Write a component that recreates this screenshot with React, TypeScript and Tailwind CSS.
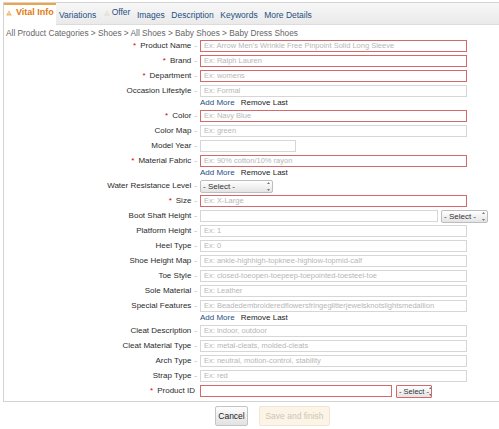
import React from 'react'

type Field = {
  label: string
  req?: boolean
  ph?: string
  kind?: 'input' | 'year' | 'select' | 'boot' | 'pid'
  addMore?: boolean
}

const FIELDS: Field[] = [
  { label: 'Product Name', req: true, ph: "Ex: Arrow Men's Wrinkle Free Pinpoint Solid Long Sleeve" },
  { label: 'Brand', req: true, ph: 'Ex: Ralph Lauren' },
  { label: 'Department', req: true, ph: 'Ex: womens' },
  { label: 'Occasion Lifestyle', ph: 'Ex: Formal', addMore: true },
  { label: 'Color', req: true, ph: 'Ex: Navy Blue' },
  { label: 'Color Map', ph: 'Ex: green' },
  { label: 'Model Year', kind: 'year' },
  { label: 'Material Fabric', req: true, ph: 'Ex: 90% cotton/10% rayon', addMore: true },
  { label: 'Water Resistance Level', kind: 'select' },
  { label: 'Size', req: true, ph: 'Ex: X-Large' },
  { label: 'Boot Shaft Height', kind: 'boot' },
  { label: 'Platform Height', ph: 'Ex: 1' },
  { label: 'Heel Type', ph: 'Ex: 0' },
  { label: 'Shoe Height Map', ph: 'Ex: ankle-highhigh-topknee-highlow-topmid-calf' },
  { label: 'Toe Style', ph: 'Ex: closed-toeopen-toepeep-toepointed-toesteel-toe' },
  { label: 'Sole Material', ph: 'Ex: Leather' },
  { label: 'Special Features', ph: 'Ex: Beadedembroideredflowersfringeglitterjewelsknotslightsmedallion', addMore: true },
  { label: 'Cleat Description', ph: 'Ex: indoor, outdoor' },
  { label: 'Cleat Material Type', ph: 'Ex: metal-cleats, molded-cleats' },
  { label: 'Arch Type', ph: 'Ex: neutral, motion-control, stability' },
  { label: 'Strap Type', ph: 'Ex: red' },
  { label: 'Product ID', req: true, kind: 'pid' },
]

const TABS = ['Variations', 'Offer', 'Images', 'Description', 'Keywords', 'More Details']

function Warn({ faded }: { faded?: boolean }) {
  return (
    <svg width="6" height="6" viewBox="0 0 6 6" className="shrink-0">
      <path d="M3 0.3 L5.8 5.6 L0.2 5.6 Z" fill={faded ? '#e6dccb' : '#f3b25c'} />
      <path d="M3 2 V3.9 M3 4.5 V5" stroke="#fff" strokeWidth="0.7" />
    </svg>
  )
}

function Arrows() {
  return (
    <svg width="3" height="9" viewBox="0 0 3 9" className="shrink-0">
      <path d="M0 2 L1.5 0 L3 2 Z" fill="#777" />
      <path d="M0 7 L1.5 9 L3 7 Z" fill="#777" />
    </svg>
  )
}

function Select({ w, red }: { w: string; red?: boolean }) {
  return (
    <div
      className={`${w} h-[13px] flex items-center justify-between px-[2px] border ${
        red ? 'border-[#d4696b] rounded-[1px] text-[7.5px]' : 'border-[#bdbdbd] rounded-[2px] text-[8px]'
      } bg-gradient-to-b from-[#ffffff] to-[#e4e4e4] text-[#333] leading-[11px] whitespace-nowrap overflow-hidden`}
    >
      <span>{red ? '- Select -' : '- Select -'}</span>
      <Arrows />
    </div>
  )
}

function Box({ w, ph, red }: { w: string; ph?: string; red?: boolean }) {
  return (
    <div
      className={`${w} h-[12px] border ${
        red ? 'border-[#d4696b]' : 'border-[#d6d6d6]'
      } pl-[3px] text-[7.5px] leading-[10px] text-[#b7b7b7] whitespace-nowrap overflow-hidden`}
    >
      {ph}
    </div>
  )
}

function Label({ f }: { f: Field }) {
  const dash = f.kind !== 'pid'
  return (
    <div className={`w-[193px] shrink-0 text-right leading-[12px] text-[#2b2b2b] whitespace-nowrap ${dash ? '' : 'pr-[2px]'}`}>
      {f.req && <span className="text-[#d0021b] mr-[4px]">*</span>}
      {f.label}
      {dash && <span className="text-[#a8a8a8] ml-[3px]">-</span>}
    </div>
  )
}

function Control({ f }: { f: Field }) {
  switch (f.kind) {
    case 'year':
      return <Box w="w-[96px]" />
    case 'select':
      return <Select w="w-[73px]" />
    case 'boot':
      return (
        <div className="flex items-start gap-[3px]">
          <Box w="w-[238px]" />
          <Select w="w-[47px]" />
        </div>
      )
    case 'pid':
      return (
        <div className="flex items-start gap-[4px]">
          <Box w="w-[192px]" red />
          <Select w="w-[36px]" red />
        </div>
      )
    default:
      return <Box w="w-[267px]" ph={f.ph} red={f.req} />
  }
}

export default function App() {
  return (
    <div className="w-[499px] h-[429px] bg-white overflow-hidden font-['Liberation_Sans',Arial,sans-serif] text-[8px]">
      {/* Panel */}
      <div className="ml-[3px] mt-[2px] border-l border-y border-[#d3d3d3]">
        {/* Tabs */}
        <div className="flex h-[22px] bg-gradient-to-b from-[#f7f7f7] to-[#eaeaea] border-b border-[#dcdcdc]">
          <div className="-mb-px h-[23px] w-[52px] flex items-start gap-[2px] pl-[2px] pt-[2px] bg-white border-t-2 border-[#f0a347]">
            <div className="mt-[3px]">
              <Warn />
            </div>
            <span className="text-[9px] font-bold text-[#e47911] leading-[10px] ml-[2px]">Vital Info</span>
          </div>
          <div className="flex items-start gap-[6.5px] pl-[3px] pt-[6.5px] text-[8.5px] leading-[10px] text-[#1f4f82]">
            {TABS.map(t =>
              t === 'Offer' ? (
                <div key={t} className="flex items-start gap-[2px] -mt-[3px] ml-[1px]">
                  <div className="mt-[3px]">
                    <Warn faded />
                  </div>
                  <span>{t}</span>
                </div>
              ) : (
                <span key={t}>{t}</span>
              )
            )}
          </div>
        </div>

        {/* Breadcrumb */}
        <div className="h-[15px] pl-[2px] pt-[3px] text-[8.3px] leading-[10px] text-[#666] whitespace-nowrap">
          All Product Categories &gt; Shoes &gt; All Shoes &gt; Baby Shoes &gt; Baby Dress Shoes
        </div>

        {/* Fields */}
        <div className="pb-[1px]">
          {FIELDS.map(f => (
            <React.Fragment key={f.label}>
              <div className="h-[15px] flex items-start">
                <Label f={f} />
                <div className="ml-[3px]">
                  <Control f={f} />
                </div>
              </div>
              {f.addMore && (
                <div className="h-[11px] -mt-[1px] pl-[196px] flex gap-[6px] leading-[8px] whitespace-nowrap">
                  <span className="text-[#1f4f82]">Add More</span>
                  <span className="text-[#222]">Remove Last</span>
                </div>
              )}
            </React.Fragment>
          ))}
        </div>
      </div>

      {/* Buttons */}
      <div className="flex gap-[11px] pl-[215px] pt-[4px]">
        <div className="h-[20px] w-[33px] flex items-center justify-center border border-[#c4c4c4] rounded-[2px] bg-gradient-to-b from-[#fdfdfd] to-[#e2e2e2] text-[8.5px] text-[#222]">
          Cancel
        </div>
        <div className="h-[20px] w-[71px] flex items-center justify-center border border-[#f1e6d2] rounded-[2px] bg-[#fbf4e7] text-[8.5px] text-[#cfc6b6]">
          Save and finish
        </div>
      </div>
    </div>
  )
}
